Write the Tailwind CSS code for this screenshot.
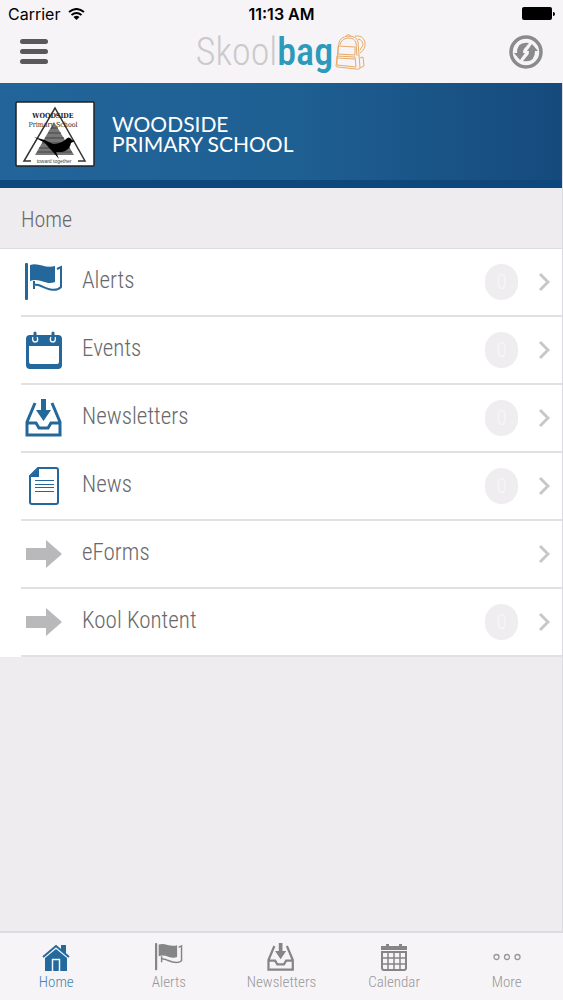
<!DOCTYPE html>
<html lang="en">
<head>
  <meta charset="UTF-8">
  <meta name="viewport" content="width=device-width, initial-scale=1.0">
  <title>Skoolbag - Woodside Primary School</title>
  <script src="https://cdn.jsdelivr.net/npm/@tailwindcss/browser@4"></script>
</head>
<body class="bg-[#eeecef]">

  <!-- Shared icons -->
  <svg class="hidden" aria-hidden="true">
    <symbol id="icon-flag" viewBox="0 0 38 38">
      <rect x="0" y="0" width="3" height="37" rx="1" fill="currentColor"/>
      <path d="M5 2C14-1 20 6 30 3V19C21 23 15 14 5 18Z" fill="currentColor"/>
      <path d="M32 6L36 4V24C30 30 21 25 16 23Q12 21 8 22M9 18V26" fill="none" stroke="currentColor" stroke-width="2"/>
    </symbol>
    <symbol id="icon-tray" viewBox="0 0 38 38">
      <path d="M10 4L2 23V36H35V23L27 4M2 24H11L14 29H23L26 24H35" fill="none" stroke="currentColor" stroke-width="3"/>
      <path d="M16 0H21V11H26L18.500 22L11 11H16Z" fill="currentColor"/>
    </symbol>
    <symbol id="icon-chevron" viewBox="0 0 12 20">
      <path d="M2 2L10 10L2 18" fill="none" stroke="currentColor" stroke-width="3"/>
    </symbol>
    <symbol id="icon-arrow" viewBox="0 0 36 28">
      <path d="M0 8H20V0L36 14L20 28V20H0Z" fill="currentColor"/>
    </symbol>
  </svg>

  <div class="flex min-h-screen flex-col font-['Roboto_Condensed','Roboto',sans-serif] font-light">

    <!-- Status bar -->
    <div class="grid h-7 grid-cols-3 items-center bg-[#f6f4f7] px-2 font-['Inter',sans-serif] text-base text-black">
      <div class="flex items-center gap-2 font-normal">
        <span>Carrier</span>
        <svg class="h-3 w-[17px]" viewBox="0 0 17 12" fill="none" stroke="currentColor" stroke-width="2" aria-label="Wi-Fi">
          <path d="M1 4Q8.500-2 16 4M3.500 7Q8.500 3 13.500 7"/>
          <path d="M5.500 9Q8.500 6.500 11.500 9L8.500 12Z" fill="currentColor" stroke="none"/>
        </svg>
      </div>
      <span class="text-center font-semibold">11:13 AM</span>
      <svg class="h-[14px] w-[33px] justify-self-end" viewBox="0 0 33 14" aria-label="Battery full">
        <rect width="30" height="13" rx="2" fill="#000"/>
        <path d="M31 5Q33 5 33 7T31 9Z" fill="#000"/>
      </svg>
    </div>

    <!-- Header -->
    <header class="grid h-[55px] grid-cols-3 items-center bg-[#f6f4f7] px-5 pb-2">
      <button type="button" aria-label="Menu" class="flex w-7 flex-col gap-[5px]">
        <span class="h-[5px] rounded-sm bg-[#59595c]"></span>
        <span class="h-[5px] rounded-sm bg-[#59595c]"></span>
        <span class="h-[5px] rounded-sm bg-[#59595c]"></span>
      </button>
      <div class="flex items-center justify-center gap-[2px]">
        <p class="text-[38px] leading-9 whitespace-nowrap text-[#cbc9cc]">Skool<span class="font-medium text-[#2b9abb]">bag</span></p>
        <svg class="h-9 w-8 shrink-0" viewBox="0 0 32 36" fill="none" stroke="#e6ab68" stroke-width="1" aria-hidden="true">
          <path d="M1 32L4 9Q5 3 13 2Q22 2 23 8L25 34Q24 36 21 35L3 33Q1 33 1 32Z"/>
          <path d="M5 11Q6 5 13 4Q20 4 21 9L22 22M11 2Q13-1 16 2"/>
          <path d="M3 12L20 13V21L3 20ZM2 22L20 23L21 33L2 31Z"/>
          <path d="M2 24L20 25M20 2Q28 1 30 8Q31 15 25 19M23 5Q28 6 28 11L25 16M25 24L28 23L29 32L25 34"/>
        </svg>
      </div>
      <button type="button" aria-label="Refresh" class="h-[34px] w-[34px] justify-self-end text-[#8b8b8d]">
        <svg viewBox="0 0 34 34" fill="none">
          <circle cx="17" cy="17" r="15" stroke="currentColor" stroke-width="3.500"/>
          <path d="M20 8Q8 6 8 18H5L11 25L16 18H14Q14 15 15 14Z" fill="currentColor"/>
          <path d="M14 26Q26 28 26 16H29L23 9L18 16H20Q20 19 19 20Z" fill="currentColor"/>
        </svg>
      </button>
    </header>

    <!-- Everything between header and tab bar has a thin line on its right -->
    <main class="flex-1 border-r border-[#dcdbdf]">

      <!-- School banner -->
      <section class="flex h-[105px] items-center gap-[17px] border-b-8 border-[#0d477b] bg-linear-to-r from-[#22659a] via-[#1f6093] to-[#164a7d] pt-1 pl-[15px]">
        <svg class="h-[66px] w-20 shrink-0" viewBox="0 0 80 66" role="img" aria-label="Woodside Primary School crest">
          <rect x="1" y="1" width="78" height="64" rx="1" fill="#fff" stroke="#222" stroke-width="1.500"/>
          <path d="M16 60H9L40 7L70 60H63" fill="none" stroke="#333" stroke-width="1.500"/>
          <path d="M39 21L20 54H59Z" fill="#777"/>
          <path d="M36 27H43M33 32H46M30 37H49M27 42H52M24 47H55M22 51H57" stroke="#444" stroke-width="1"/>
          <text x="38" y="17" text-anchor="middle" font-family="DejaVu Serif Condensed, DejaVu Serif, serif" font-size="7" font-weight="700" fill="#222">WOODSIDE</text>
          <text x="38" y="26" text-anchor="middle" font-family="DejaVu Serif Condensed, DejaVu Serif, serif" font-size="7" fill="#222">Primary School</text>
          <path d="M19 36Q29 38 38 43Q45 43 50 39Q54 34 57 39L60 40L56 42Q55 49 47 51L41 51L44 58L38 51Q34 47 30 42Z" fill="#000"/>
          <text x="39" y="62" text-anchor="middle" font-family="Liberation Sans, sans-serif" font-size="5" fill="#444">toward together</text>
        </svg>
        <h1 class="font-['Lato',sans-serif] text-[21px] leading-5 font-normal text-white">WOODSIDE<br>PRIMARY SCHOOL</h1>
      </section>

      <h2 class="border-b border-[#dcdbde] px-[21px] pt-4 pb-3 text-[22px] leading-8 text-[#69696c]">Home</h2>

      <!-- Menu -->
      <nav aria-label="School content" class="bg-white text-[23px] text-[#69696c]">
        <ul class="ml-[21px]">
          <li class="border-b-2 border-[#e1e0e3]">
            <a href="#alerts" class="flex h-[66px] items-center pr-3">
              <svg class="ml-1 h-[38px] w-[38px] text-[#24689b]"><use href="#icon-flag"/></svg>
              <span class="ml-[19px] flex-1 pb-[2px]">Alerts</span>
              <span class="flex h-9 w-[33px] items-center justify-center rounded-full bg-[#efedf0] text-xl text-[#f8f7f9]">0</span>
              <svg class="ml-5 h-5 w-3 text-[#c8c7cb]"><use href="#icon-chevron"/></svg>
            </a>
          </li>
          <li class="border-b-2 border-[#e1e0e3]">
            <a href="#events" class="flex h-[66px] items-center pr-3">
              <svg class="ml-1 h-[38px] w-[38px] text-[#24689b]" viewBox="0 0 38 38">
                <path fill-rule="evenodd" d="M5 4H33Q37 4 37 8V34Q37 38 33 38H5Q1 38 1 34V8Q1 4 5 4ZM4 15V31Q4 33 6 33H32Q34 33 34 31V15Z" fill="currentColor"/>
                <path d="M8 6Q7 11 10 11Q14 11 12 6M26 6Q24 11 28 11Q31 11 30 6" fill="none" stroke="#fff" stroke-width="1.500"/>
                <path d="M10 2V8M28 2V8" stroke="currentColor" stroke-width="3" stroke-linecap="round"/>
              </svg>
              <span class="ml-[19px] flex-1 pb-[2px]">Events</span>
              <span class="flex h-9 w-[33px] items-center justify-center rounded-full bg-[#efedf0] text-xl text-[#f8f7f9]">0</span>
              <svg class="ml-5 h-5 w-3 text-[#c8c7cb]"><use href="#icon-chevron"/></svg>
            </a>
          </li>
          <li class="border-b-2 border-[#e1e0e3]">
            <a href="#newsletters" class="flex h-[66px] items-center pr-3">
              <svg class="ml-1 h-[38px] w-[38px] text-[#24689b]"><use href="#icon-tray"/></svg>
              <span class="ml-[19px] flex-1 pb-[2px]">Newsletters</span>
              <span class="flex h-9 w-[33px] items-center justify-center rounded-full bg-[#efedf0] text-xl text-[#f8f7f9]">0</span>
              <svg class="ml-5 h-5 w-3 text-[#c8c7cb]"><use href="#icon-chevron"/></svg>
            </a>
          </li>
          <li class="border-b-2 border-[#e1e0e3]">
            <a href="#news" class="flex h-[66px] items-center pr-3">
              <svg class="ml-1 h-[38px] w-[38px] text-[#24689b]" viewBox="0 0 38 38">
                <path d="M13 1H31Q33 1 33 3V35Q33 37 31 37H7Q5 37 5 35V9Z" fill="none" stroke="currentColor" stroke-width="2"/>
                <path d="M14 1V10H5Z" fill="currentColor"/>
                <path d="M10 13.500H29M10 17.500H29M10 20.500H29M10 24.500H29" stroke="currentColor" stroke-width="1"/>
              </svg>
              <span class="ml-[19px] flex-1 pb-[2px]">News</span>
              <span class="flex h-9 w-[33px] items-center justify-center rounded-full bg-[#efedf0] text-xl text-[#f8f7f9]">0</span>
              <svg class="ml-5 h-5 w-3 text-[#c8c7cb]"><use href="#icon-chevron"/></svg>
            </a>
          </li>
          <li class="border-b-2 border-[#e1e0e3]">
            <a href="#eforms" class="flex h-[66px] items-center pr-3">
              <svg class="ml-[5px] h-7 w-9 text-[#b9b8bb]"><use href="#icon-arrow"/></svg>
              <span class="ml-5 flex-1 pb-[2px]">eForms</span>
              <svg class="ml-5 h-5 w-3 text-[#c8c7cb]"><use href="#icon-chevron"/></svg>
            </a>
          </li>
          <li class="border-b-2 border-[#e1e0e3]">
            <a href="#kool-kontent" class="flex h-[66px] items-center pr-3">
              <svg class="ml-[5px] h-7 w-9 text-[#b9b8bb]"><use href="#icon-arrow"/></svg>
              <span class="ml-5 flex-1 pb-[2px]">Kool Kontent</span>
              <span class="flex h-9 w-[33px] items-center justify-center rounded-full bg-[#efedf0] text-xl text-[#f8f7f9]">0</span>
              <svg class="ml-5 h-5 w-3 text-[#c8c7cb]"><use href="#icon-chevron"/></svg>
            </a>
          </li>
        </ul>
      </nav>
    </main>

    <!-- Tab bar -->
    <nav aria-label="Tabs" class="grid h-[69px] grid-cols-5 border-t-2 border-[#dddbdf] bg-[#f6f4f7] pt-[10px] text-[15px] leading-5 text-[#98979a]">
      <a href="#home" aria-current="page" class="flex flex-col items-center gap-[1px] text-[#4583ae]">
        <svg class="h-7 w-7 text-[#226a9e]" viewBox="0 0 28 28">
          <path d="M19 2H24V11L19 7Z" fill="currentColor"/>
          <path d="M1 14L14 3L27 14" fill="none" stroke="currentColor" stroke-width="2"/>
          <path d="M3 15L14 6L25 15V28H3Z" fill="currentColor"/>
          <path d="M10.500 28V16.500H17.500V28" fill="none" stroke="#f6f4f7" stroke-width="1.500"/>
        </svg>
        <span>Home</span>
      </a>
      <a href="#alerts" class="flex flex-col items-center gap-[1px]">
        <svg class="h-7 w-7 text-[#858487]"><use href="#icon-flag"/></svg>
        <span>Alerts</span>
      </a>
      <a href="#newsletters" class="flex flex-col items-center gap-[1px]">
        <svg class="h-7 w-7 text-[#858487]"><use href="#icon-tray"/></svg>
        <span>Newsletters</span>
      </a>
      <a href="#calendar" class="flex flex-col items-center gap-[1px]">
        <svg class="h-7 w-7 text-[#858487]" viewBox="0 0 28 28">
          <path d="M1 3H27V7H1ZM6 1H9V4H6ZM19 1H22V4H19Z" fill="currentColor"/>
          <path d="M2 9H26V25Q26 27 24 27H4Q2 27 2 25Z" fill="none" stroke="currentColor" stroke-width="2"/>
          <path d="M8 9V27M14 9V27M20 9V27M2 15H26M2 21H26" stroke="currentColor" stroke-width="1.500"/>
        </svg>
        <span>Calendar</span>
      </a>
      <a href="#more" class="flex flex-col items-center gap-[1px]">
        <svg class="h-7 w-7 text-[#98979a]" viewBox="0 0 28 28" fill="none" stroke="currentColor" stroke-width="1.300">
          <circle cx="3.500" cy="14" r="2.500"/>
          <circle cx="14" cy="14" r="2.500"/>
          <circle cx="24.500" cy="14" r="2.500"/>
        </svg>
        <span>More</span>
      </a>
    </nav>
  </div>

</body>
</html>
